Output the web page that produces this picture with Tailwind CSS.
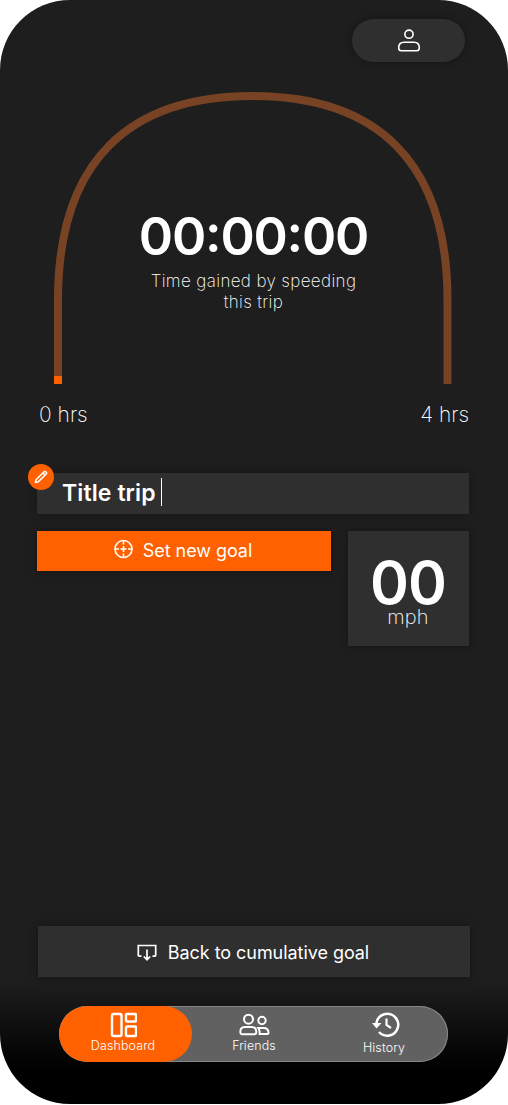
<!DOCTYPE html>
<html lang="en">
<head>
<meta charset="utf-8">
<title>Dashboard</title>
<script src="https://cdn.jsdelivr.net/npm/@tailwindcss/browser@4"></script>
</head>
<body class="bg-white font-['Inter',sans-serif] text-white">
<main class="flex h-[1104px] w-[508px] flex-col overflow-hidden rounded-[70px] bg-[linear-gradient(to_bottom,#1e1e1e_0,#1e1e1e_980px,#000_1070px)]">
  <header class="flex justify-end pt-[19px] pr-[43px]">
    <button class="flex h-[43px] w-[113px] items-center justify-center rounded-full bg-[#2f2f2f] shadow-[0_0_8px_rgba(0,0,0,0.35)]" aria-label="Profile">
      <svg class="h-6 w-6" viewBox="0 0 24 24" fill="none" stroke="#fff" stroke-width="1.600"><circle cx="12" cy="5.200" r="4.1"/><path d="M1.700 18.800C1.700 14.900 4.200 13.300 7 13.300h10c2.800 0 5.300 1.600 5.300 5.500 0 1.900-.7 2.900-2.300 2.900H4c-1.600 0-2.300-1-2.300-2.900Z"/></svg>
    </button>
  </header>

  <section class="grid h-[322px] grid-cols-1 grid-rows-1">
    <svg class="col-start-1 row-start-1 h-[322px] w-[508px]" viewBox="0 62 508 322" fill="none" stroke-width="8">
      <path stroke="#784324" d="M58 384V300C58 160 130 96 252.500 96S447.500 160 447.500 300V384"/>
      <path stroke="#ff6000" d="M58 384v-8"/>
    </svg>
    <div class="col-start-1 row-start-1 flex flex-col items-center pt-[145px] pr-px text-center">
      <div class="h-[60px] text-[52px] leading-[60px] font-semibold tracking-[-1.2px] whitespace-nowrap">00<span class="relative -top-[3px]">:</span>00<span class="relative -top-[3px]">:</span>00</div>
      <p class="mt-[4px] text-[17px] leading-[21px] font-extralight tracking-[0.36px]">Time gained by speeding<br>this trip</p>
    </div>
  </section>

  <div class="mt-[17px] flex h-[28px] justify-between pr-[39px] pl-[39px] text-[21px] leading-[28px] font-extralight">
    <span>0 hrs</span><span>4 hrs</span>
  </div>

  <section class="mt-[44px] pr-[39px] pl-[37px]">
    <div class="relative flex h-[41px] items-center bg-[#2f2f2f] pl-[25px] shadow-[0_0_8px_rgba(0,0,0,0.3)]">
      <span class="absolute -top-[9px] -left-[9px] flex h-[26px] w-[26px] items-center justify-center rounded-full bg-[#ff6000]">
        <svg class="h-[14px] w-[14px]" viewBox="0 0 15 15" fill="none" stroke="#fff" stroke-width="1.700" stroke-linejoin="round"><path d="M1.500 13.300 2.200 10.500 10.700 1.900Q11.800 1 12.900 2.100T13.100 4.300L4.700 12.500ZM9.400 3.100 11.900 5.600"/></svg>
      </span>
      <span class="-mt-[2px] text-[23px] leading-[28px] font-semibold tracking-[0.1px]">Title trip</span>
      <span class="-mt-[3px] ml-[5px] h-[28px] w-[1.500px] bg-white"></span>
    </div>
    <div class="mt-[17px] flex items-start justify-between">
      <button class="flex h-[40px] w-[294px] items-center justify-center gap-[9px] bg-[#ff6000] pr-[2px] shadow-[0_0_8px_rgba(0,0,0,0.35)]">
        <svg class="-mt-[4px] h-5 w-5" viewBox="0 0 20 20" fill="none" stroke="#fff" stroke-width="1.600"><circle cx="9.500" cy="10" r="8.500"/><path d="M9.500 1.500v4M9.500 14.500v4M1 10h4M14 10h4M9.500 7v6M6.500 10h6"/></svg>
        <span class="-mt-px text-[18px] leading-5 tracking-[-0.05px]">Set new goal</span>
      </button>
      <div class="flex h-[115px] w-[121px] flex-col items-center bg-[#2f2f2f] pt-[21px] pr-px shadow-[0_0_8px_rgba(0,0,0,0.35)]">
        <span class="h-[55px] text-[59px] leading-[62px] font-semibold tracking-[-1px]">00</span>
        <span class="text-[20px] leading-[20px] font-extralight tracking-[0.2px]">mph</span>
      </div>
    </div>
  </section>

  <section class="mt-[280px] pr-[38px] pl-[38px]">
    <button class="flex h-[51px] w-[432px] items-center justify-center gap-[11px] bg-[#2f2f2f] pt-[2px] pr-[2px] shadow-[0_0_8px_rgba(0,0,0,0.35)]">
      <svg class="h-[18px] w-[20px]" viewBox="0 0 20 18" fill="none" stroke="#fff" stroke-width="1.700"><path d="M4.500 12.200H2.200Q1.300 12.200 1.300 11.300V1.500H18.700V11.300Q18.700 12.200 17.800 12.200H15.500M10 5.500V15.500M6.800 12.500 10 15.700 13.200 12.500"/></svg>
      <span class="text-[18px] leading-5 tracking-[-0.05px]">Back to cumulative goal</span>
    </button>
  </section>

  <nav class="mt-[29px] ml-[59px] flex h-[56px] w-[389px] overflow-hidden rounded-full bg-[#616161] text-[12.500px] leading-[15px] font-light tracking-[0.1px] shadow-[inset_0_0_0_1px_#888]">
    <a class="flex w-[133px] flex-col items-center rounded-full bg-[#ff6000] pt-[6px] pr-[5px]">
      <svg class="h-[26px] w-[28px]" viewBox="0 0 28 26" fill="none" stroke="#fff" stroke-width="2.400" stroke-linejoin="round"><rect x="3" y="2" width="9.500" height="22" rx="1.500"/><rect x="17" y="2" width="10" height="7.500" rx=".8"/><rect x="17" y="14.500" width="10" height="9.500" rx=".8"/></svg>
      <span>Dashboard</span>
    </a>
    <a class="flex w-[124px] flex-col items-center pt-[6px]">
      <svg class="h-[26px] w-[32px]" viewBox="0 0 32 26" fill="none" stroke="#fff" stroke-width="2"><circle cx="10.500" cy="7.200" r="4.500"/><circle cx="24" cy="8.500" r="3.700"/><path d="M2.300 20C2.300 16.500 4.300 15 6.800 15h7c2.500 0 4.500 1.500 4.500 5 0 1.500-.7 2.200-2 2.200H4.300c-1.300 0-2-.7-2-2.200ZM20.300 16h5.200c2.700 0 5 1.300 5 4.700 0 .8-.4 1.200-1.200 1.200h-7.700q.5-3.200-1.300-5.900Z"/></svg>
      <span>Friends</span>
    </a>
    <a class="flex flex-1 flex-col items-center pt-[5px] pl-[4px]">
      <svg class="h-[29px] w-[32px]" viewBox="0 0 32 29" fill="none" stroke="#fff" stroke-width="2.500"><path d="M8.300 12.500A11 11 0 1 1 11 21"/><path fill="#fff" stroke="none" d="M4 12h9.500l-5 5.500Z"/><path stroke-width="2.200" d="M18.500 7.500v6.500l4.500 3"/></svg>
      <span>History</span>
    </a>
  </nav>
</main>
</body>
</html>
